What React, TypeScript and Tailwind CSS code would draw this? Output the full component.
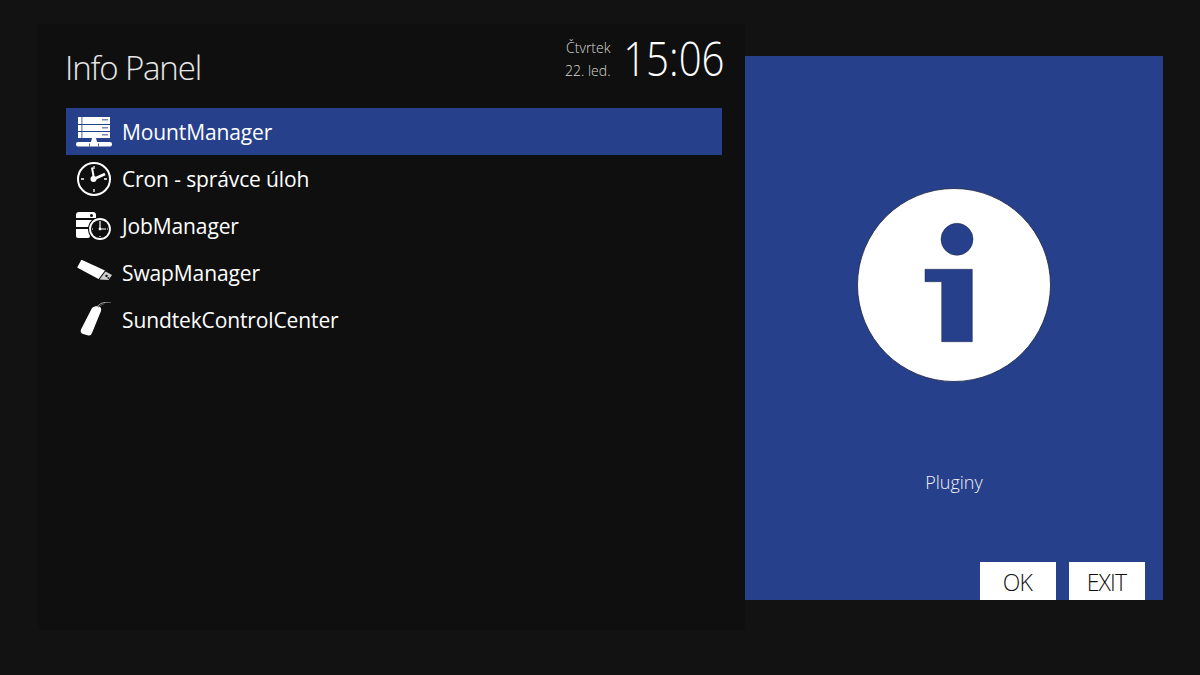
import { FC, ReactNode } from "react";

const ServerIcon = () => (
  <svg viewBox="0 0 36 32" className="w-[36px] h-[32px]" fill="white">
    <path d="M2 1h32v7H2zM2 9h32v6H2zM2 16h32v6H2z" />
    <path d="M16 22h4l1 4h-6z" />
    <rect x="0" y="26" width="36" height="4.500" rx="2" />
    <path d="M26 3h6v1.500h-6zM26 11h6v1.500h-6zM26 18h6v1.500h-6z" fill="#7b88ad" />
    <path d="M5.500 1h.8v21h-.8z" fill="#26408b" />
    <path d="M13 27.500h.8v3h-.8zM22 27.500h.8v3h-.8z" fill="#26408b" />
  </svg>
);

const ClockIcon = () => (
  <svg viewBox="0 0 36 36" className="w-[36px] h-[36px]" fill="none" stroke="white">
    <circle cx="18" cy="18" r="16" strokeWidth="2" />
    <path d="M18 5v3M18 28v3M5 18h3M28 18h3" strokeWidth="1.300" />
    <path d="M18 18 16 6.500" strokeWidth="2" />
    <path d="M18 18 29 13" strokeWidth="2.600" />
    <circle cx="17.500" cy="18" r="3" fill="white" strokeWidth="0" />
  </svg>
);

const JobIcon = () => (
  <svg viewBox="0 0 36 30" className="w-[36px] h-[30px]" fill="white">
    <path d="M3 1h14a3 3 0 0 1 3 3v3H0V4a3 3 0 0 1 3-3z" />
    <path d="M0 9h20v7H0z" />
    <path d="M0 18h14v7a2 2 0 0 1-2 2H2a2 2 0 0 1-2-2z" />
    <circle cx="15.500" cy="4.500" r="1.500" fill="#0f0f0f" />
    <circle cx="15.500" cy="12.500" r="1.500" fill="#0f0f0f" />
    <circle cx="24" cy="18" r="12" fill="#0f0f0f" />
    <circle cx="24" cy="18" r="10" fill="none" stroke="white" strokeWidth="1.800" />
    <path d="M24 11v7h6M24 10v1M24 25v1M16 18h1M31 18h1" fill="none" stroke="white" strokeWidth="1.200" />
    <circle cx="24" cy="18" r="1.400" />
  </svg>
);

const UsbIcon = () => (
  <svg viewBox="0 0 36 28" className="w-[36px] h-[28px]" fill="white">
    <path d="M6 1 29 11.500 22.500 20 2 9a1 1 0 0 1-.3-1.600l3-5.500A1 1 0 0 1 6 1z" />
    <path d="M29.500 12.500 36 16l-3.500 5-9-.5z" fill="#cfcfcf" />
    <path d="M30 15.500l2 1-1 1.800-2-1zM32 18l1.500.7-.8 1.300-1.500-.7z" fill="#0f0f0f" />
  </svg>
);

const StickIcon = () => (
  <svg viewBox="0 -1 36 35" className="w-[36px] h-[35px]" fill="none">
    <path
      d="M16 5c2-2 6-2.500 8-1 1.200 1 1.500 2.300 1 4L16 30a3.500 3.500 0 0 1-4.500 2.300L7 31a3.500 3.500 0 0 1-2-4.500z"
      fill="white"
    />
    <path d="M21 3.500 25 .5c3-1.200 6-1.500 10-1.500" stroke="#b5b5b5" strokeWidth="0.900" />
    <path d="M22 4.500c2-1.500 4-3 6.500-4" stroke="#777777" strokeWidth="0.700" />
  </svg>
);

const items: { label: string; icon: ReactNode; active?: boolean }[] = [
  { label: "MountManager", icon: <ServerIcon />, active: true },
  { label: "Cron - správce úloh", icon: <ClockIcon /> },
  { label: "JobManager", icon: <JobIcon /> },
  { label: "SwapManager", icon: <UsbIcon /> },
  { label: "SundtekControlCenter", icon: <StickIcon /> },
];

const MenuRow: FC<{ label: string; icon: ReactNode; active?: boolean }> = ({ label, icon, active }) => {
  return (
    <div className={`h-[47px] flex items-center text-[21px] tracking-[-0.12px] text-white ${active ? "bg-[#26408b]" : ""}`}>
      <div className="w-[56px] flex justify-center">{icon}</div>
      <span className="mt-[2px]">{label}</span>
    </div>
  );
};

export default function App() {
  return (
    <div className="w-[1200px] h-[675px] bg-[#121212] flex pl-[38px] pt-[24px] font-['Open_Sans',sans-serif] overflow-hidden">
      <div className="w-[707px] h-[606px] bg-[#0f0f0f] pl-[28px] pr-[23px]">
        <div className="h-[84px] flex justify-between">
          <h1 className="mt-[21px] ml-[-1px] text-[33px] leading-[46px] tracking-[-1.150px] font-light text-[#e8e8e8]">Info Panel</h1>
          <div className="flex">
            <div className="mt-[12px] flex flex-col items-end text-[14px] font-light leading-[23px] text-[#d8d8d8]">
              <span>Čtvrtek</span>
              <span>22. led.</span>
            </div>
            <div className="ml-[-4px] mr-[-3px] mt-[6px] text-[47px] leading-[56px] font-light text-white origin-right scale-x-[0.855]">15:06</div>
          </div>
        </div>
        <div className="flex flex-col">
          {items.map((item) => (
            <MenuRow key={item.label} {...item} />
          ))}
        </div>
      </div>
      <div className="mt-[32px] w-[418px] h-[544px] bg-[#26408b] flex flex-col items-center">
        <svg viewBox="0 0 194 194" className="mt-[132px] w-[194px] h-[194px]">
          <circle cx="97" cy="97" r="96.500" fill="white" stroke="#1a2340" strokeWidth="0.800" />
          <circle cx="100" cy="51.300" r="16" fill="#26408b" stroke="#1a2340" strokeWidth="0.500" />
          <path d="M68 81.300h47.300v72.400H84.700v-60H68z" fill="#26408b" stroke="#1a2340" strokeWidth="0.500" />
        </svg>
        <div className="mt-[88px] text-[18px] leading-[24px] font-light text-[#f0f0f0]">Pluginy</div>
        <div className="mt-[auto] w-full flex justify-end gap-[13px] pr-[18px]">
          <button className="w-[76px] h-[38px] bg-white text-[23px] leading-[38px] tracking-[-0.800px] pr-[1px] pt-[1px] font-light text-[#111111]">OK</button>
          <button className="w-[76px] h-[38px] bg-white text-[23px] leading-[38px] tracking-[-0.800px] pr-[1px] pt-[1px] font-light text-[#111111]">EXIT</button>
        </div>
      </div>
    </div>
  );
}
